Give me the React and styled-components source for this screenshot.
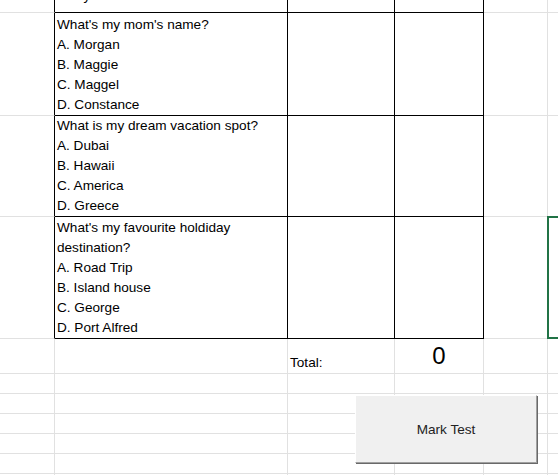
import React from "react";
import styled, { createGlobalStyle } from "styled-components";

const GlobalStyle = createGlobalStyle`
  html, body {
    margin: 0;
    padding: 0;
    background: #ffffff;
    overflow: hidden;
  }
  body {
    font-family: "Liberation Sans", Arial, sans-serif;
    font-size: 13.6px;
    color: #000000;
  }
`;

//styled comp

const Sheet = styled.div`
  position: relative;
  width: 558px;
  height: 475px;
  overflow: hidden;
  display: grid;
  grid-template-columns: 55px 233px 107px 89px 64px 80px;
  grid-auto-rows: auto;
`;

const Cell = styled.div`
  position: relative;
  box-sizing: border-box;
  height: ${(props) => props.$height}px;
  border-right: 1px solid ${(props) => (props.$darkRight ? "#000000" : "#e1e1e1")};
  border-bottom: 1px solid ${(props) => (props.$darkBottom ? "#000000" : "#e1e1e1")};
  display: flex;
  flex-direction: column;
  justify-content: flex-end;
  align-items: ${(props) => (props.$center ? "center" : "stretch")};
  padding: 0 2px ${(props) => props.$padBottom || 0}px;
  overflow: ${(props) => (props.$clip ? "hidden" : "visible")};
`;

const Line = styled.div`
  line-height: 20px;
  height: 20px;
  white-space: nowrap;
  flex-shrink: 0;
`;

const BigNumber = styled.div`
  font-size: 24px;
  line-height: 28px;
  flex-shrink: 0;
`;

const Selection = styled.div`
  position: absolute;
  left: -1px;
  top: -1px;
  bottom: -1px;
  right: -30px;
  border: 2px solid #217346;
  pointer-events: none;
`;

const MarkButton = styled.button`
  position: absolute;
  left: 355px;
  top: 395px;
  width: 182px;
  height: 68px;
  box-sizing: border-box;
  background-color: #f0f0f0;
  border: none;
  border-top: 1px solid #ffffff;
  border-left: 1px solid #ffffff;
  border-right: 1px solid #a0a0a0;
  border-bottom: 1px solid #a0a0a0;
  box-shadow: 1px 1px 0 0 #696969;
  font-family: "Liberation Sans", Arial, sans-serif;
  font-size: 13.6px;
  color: #222222;
  padding: 0;
  cursor: pointer;
`;

const questions = [
  { height: 13, lines: ["D. Kyle"], clip: true, padBottom: 6 },
  {
    height: 103,
    lines: ["What's my mom's name?", "A. Morgan", "B. Maggie", "C. Maggel", "D. Constance"],
  },
  {
    height: 101,
    lines: ["What is my dream vacation spot?", "A. Dubai", "B. Hawaii", "C. America", "D. Greece"],
  },
  {
    height: 122,
    lines: [
      "What's my favourite holdiday",
      "destination?",
      "A. Road Trip",
      "B. Island house",
      "C. George",
      "D. Port Alfred",
    ],
    selected: true,
  },
];

const emptyRows = [20, 20, 20, 20, 20, 20];

const App = () => {
  return (
    <>
      <GlobalStyle />
      <Sheet>
        {questions.map((q, index) => (
          <React.Fragment key={index}>
            <Cell $height={q.height} $darkRight />
            <Cell
              $height={q.height}
              $darkRight
              $darkBottom
              $clip={q.clip}
              $padBottom={q.padBottom}
            >
              {q.lines.map((line) => (
                <Line key={line}>{line}</Line>
              ))}
            </Cell>
            <Cell $height={q.height} $darkRight $darkBottom />
            <Cell $height={q.height} $darkRight $darkBottom />
            <Cell $height={q.height} />
            <Cell $height={q.height}>{q.selected && <Selection />}</Cell>
          </React.Fragment>
        ))}

        <Cell $height={35} />
        <Cell $height={35} />
        <Cell $height={35}>
          <Line>Total:</Line>
        </Cell>
        <Cell $height={35} $center $padBottom={3}>
          <BigNumber>0</BigNumber>
        </Cell>
        <Cell $height={35} />
        <Cell $height={35} />

        {emptyRows.map((h, index) => (
          <React.Fragment key={"r" + index}>
            <Cell $height={h} />
            <Cell $height={h} />
            <Cell $height={h} />
            <Cell $height={h} />
            <Cell $height={h} />
            <Cell $height={h} />
          </React.Fragment>
        ))}

        <MarkButton>Mark Test</MarkButton>
      </Sheet>
    </>
  );
};

export default App;
